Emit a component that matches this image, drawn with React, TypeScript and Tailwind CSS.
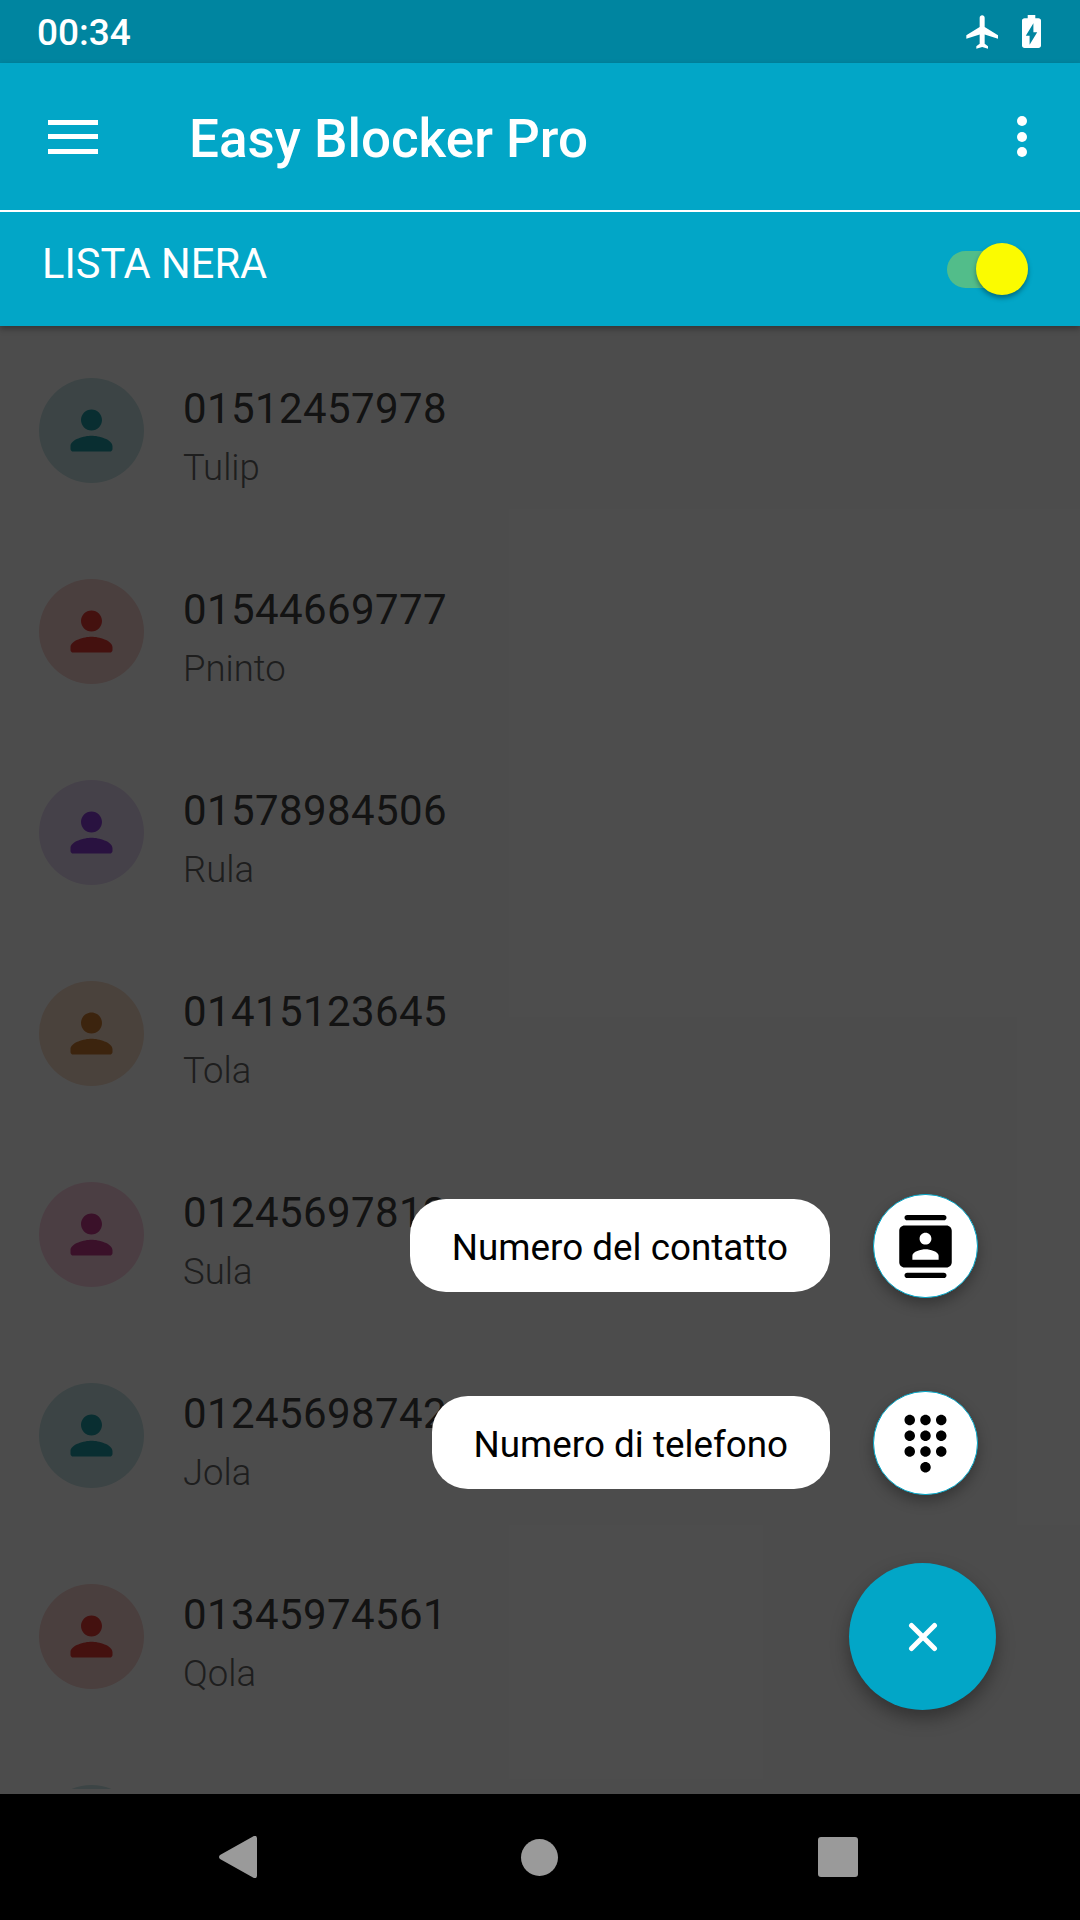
import React from 'react';

const PERSON = 'M12 12c2.21 0 4-1.79 4-4s-1.79-4-4-4-4 1.79-4 4 1.79 4 4 4zm0 2c-2.67 0-8 1.34-8 4v1c0 .55.45 1 1 1h14c.55 0 1-.45 1-1v-1c0-2.66-5.33-4-8-4z';
const CONTACTS = 'M19 0H5c-.55 0-1 .45-1 1s.45 1 1 1h14c.55 0 1-.45 1-1s-.45-1-1-1zM5 24h14c.55 0 1-.45 1-1s-.45-1-1-1H5c-.55 0-1 .45-1 1s.45 1 1 1zM20 4H4c-1.1 0-2 .9-2 2v12c0 1.1.9 2 2 2h16c1.1 0 2-.9 2-2V6c0-1.1-.9-2-2-2zm-8 2.75c1.24 0 2.25 1.01 2.25 2.25s-1.01 2.25-2.25 2.25S9.75 10.24 9.75 9 10.76 6.75 12 6.75zM17 17H7v-1.5c0-1.67 3.33-2.5 5-2.5s5 .83 5 2.5V17z';
const DIALPAD = 'M12 19c-1.1 0-2 .9-2 2s.9 2 2 2 2-.9 2-2-.9-2-2-2zM6 1c-1.1 0-2 .9-2 2s.9 2 2 2 2-.9 2-2-.9-2-2-2zm0 6c-1.1 0-2 .9-2 2s.9 2 2 2 2-.9 2-2-.9-2-2-2zm0 6c-1.1 0-2 .9-2 2s.9 2 2 2 2-.9 2-2-.9-2-2-2zm12-8c1.1 0 2-.9 2-2s-.9-2-2-2-2 .9-2 2 .9 2 2 2zm-6 8c-1.1 0-2 .9-2 2s.9 2 2 2 2-.9 2-2-.9-2-2-2zm6 0c-1.1 0-2 .9-2 2s.9 2 2 2 2-.9 2-2-.9-2-2-2zm0-6c-1.1 0-2 .9-2 2s.9 2 2 2 2-.9 2-2-.9-2-2-2zm-6 0c-1.1 0-2 .9-2 2s.9 2 2 2 2-.9 2-2-.9-2-2-2zm0-6c-1.1 0-2 .9-2 2s.9 2 2 2 2-.9 2-2-.9-2-2-2z';

const contacts = [
  { number: '01512457978', name: 'Tulip', circle: 'bg-[#c8e4e6]', icon: 'text-[#1f9ba5]' },
  { number: '01544669777', name: 'Pninto', circle: 'bg-[#f8d2cf]', icon: 'text-[#e53935]' },
  { number: '01578984506', name: 'Rula', circle: 'bg-[#e8d9f5]', icon: 'text-[#8a3fd8]' },
  { number: '01415123645', name: 'Tola', circle: 'bg-[#f8dcc8]', icon: 'text-[#c97a30]' },
  { number: '01245697812', name: 'Sula', circle: 'bg-[#fbd0e2]', icon: 'text-[#c43a8a]' },
  { number: '01245698742', name: 'Jola', circle: 'bg-[#c8e4e6]', icon: 'text-[#1f9ba5]' },
  { number: '01345974561', name: 'Qola', circle: 'bg-[#f8d2cf]', icon: 'text-[#e53935]' },
];

function Row({ number, name, circle, icon }: (typeof contacts)[number]) {
  return (
    <div className="flex h-[201px] shrink-0 pl-[39px]">
      <div className={`flex h-[105px] w-[105px] shrink-0 items-center justify-center rounded-full ${circle}`}>
        <svg width="63" height="63" viewBox="0 0 24 24" fill="currentColor" className={icon}>
          <path d={PERSON} />
        </svg>
      </div>
      <div className="ml-[39px] flex flex-col">
        <span className="mt-[3px] text-[42px] leading-[56px] tracking-[0.4px] text-[#404040]">{number}</span>
        <span className="mt-[8px] text-[36.5px] leading-[46px] font-light text-[#666]">{name}</span>
      </div>
    </div>
  );
}

function ActionRow({ label, path }: { label: string; path: string }) {
  return (
    <div className="mr-[18px] flex items-center gap-[43px]">
      <div className="mb-[1px] flex h-[93px] items-center rounded-[36px] bg-white px-[42px] pt-[5px] text-[36.8px] text-black">{label}</div>
      <div className="flex h-[104px] w-[105px] items-center justify-center rounded-full border border-[#02a6c7] bg-white shadow-[0_6px_14px_rgba(0,0,0,0.3)]">
        <svg width="63" height="63" viewBox="0 0 24 24" fill="currentColor" className="text-black">
          <path d={path} />
        </svg>
      </div>
    </div>
  );
}

export default function App() {
  return (
    <div className="flex h-[1920px] w-[1080px] flex-col overflow-hidden bg-black font-['Roboto',sans-serif]">
      {/* status bar */}
      <div className="flex h-[63px] shrink-0 items-center justify-between bg-[#0085a0] pl-[37px] pr-[39px] text-white">
        <span className="pt-[2px] text-[37px] font-medium">00:34</span>
        <div className="flex items-center gap-[19px]">
          <svg width="40" height="40" viewBox="0 0 24 24" fill="currentColor">
            <path d="M21 16v-2l-8-5V3.5c0-.83-.67-1.5-1.5-1.5S10 2.67 10 3.5V9l-8 5v2l8-2.5V19l-2 1.5V22l3.5-1 3.5 1v-1.5L13 19v-5.5l8 2.5z" />
          </svg>
          <svg width="19" height="33" viewBox="7 2 10 20" preserveAspectRatio="none" fill="currentColor">
            <path d="M15.67 4H14V2h-4v2H8.33C7.6 4 7 4.6 7 5.33v15.33C7 21.4 7.6 22 8.33 22h7.33c.74 0 1.34-.6 1.34-1.33V5.33C17 4.6 16.4 4 15.67 4zM11 20v-5.5H9L13 7v5.5h2L11 20z" />
          </svg>
        </div>
      </div>

      {/* toolbar + tab */}
      <div className="z-10 shrink-0 bg-[#02a6c7] text-white shadow-[0_3px_6px_rgba(0,0,0,0.3)]">
        <div className="flex h-[147px] items-center pl-[48px] pr-[53px]">
          <div className="flex h-[34px] w-[50px] flex-col justify-between">
            <div className="h-[5px] bg-white" />
            <div className="h-[5px] bg-white" />
            <div className="h-[5px] bg-white" />
          </div>
          <span className="ml-[91px] flex-1 pt-[5px] text-[53px] leading-none font-medium">Easy Blocker Pro</span>
          <div className="flex h-[41px] w-[10px] flex-col justify-between">
            <div className="h-[10px] rounded-full bg-white" />
            <div className="h-[10px] rounded-full bg-white" />
            <div className="h-[10px] rounded-full bg-white" />
          </div>
        </div>
        <div className="h-[2px] bg-white" />
        <div className="flex h-[114px] items-center justify-between pl-[42px] pr-[52px]">
          <span className="mb-[10px] text-[41.6px]">LISTA NERA</span>
          <div className="relative h-[37px] w-[81px] rounded-full bg-[#52bd8a]">
            <div className="absolute right-0 top-[-8px] h-[52px] w-[52px] rounded-full bg-[#fbfb00] shadow-[0_3px_5px_rgba(0,0,0,0.35)]" />
          </div>
        </div>
      </div>

      {/* list under a dim layer */}
      <div className="relative min-h-0 flex-1 bg-white pb-[5px]">
        <div className="flex h-full flex-col overflow-hidden pt-[52px]">
          {contacts.map((c) => (
            <Row key={c.number} {...c} />
          ))}
          <div className="ml-[39px] h-[105px] w-[105px] shrink-0 rounded-full bg-[#c8e4e6]" />
        </div>
        <div className="absolute inset-0 bg-black/70" />

        <div className="absolute bottom-[84px] right-[84px] flex flex-col items-end">
          <ActionRow label="Numero del contatto" path={CONTACTS} />
          <div className="h-[93px]" />
          <ActionRow label="Numero di telefono" path={DIALPAD} />
          <div className="h-[68px]" />
          <div className="flex h-[147px] w-[147px] items-center justify-center rounded-full bg-[#02a6c7] shadow-[0_8px_18px_rgba(0,0,0,0.35)]">
            <svg width="30" height="30" viewBox="0 0 30 30" stroke="white" strokeWidth="5" strokeLinecap="round">
              <path d="M3.5 3.5 26.5 26.5M26.5 3.5 3.5 26.5" />
            </svg>
          </div>
        </div>
      </div>

      {/* nav bar */}
      <div className="flex h-[126px] shrink-0 items-center bg-black">
        <svg width="38" height="42" viewBox="0 0 38 42" fill="#9a9a9a" className="ml-[219px]">
          <path d="M34 0.5c2-1.5 4-.5 4 2v37c0 2.5-2 3.5-4 2L1 23c-1.3-1-1.3-3 0-4z" />
        </svg>
        <div className="ml-[264px] h-[37px] w-[37px] rounded-full bg-[#9a9a9a]" />
        <div className="ml-[260px] h-[40px] w-[40px] rounded-[3px] bg-[#9a9a9a]" />
      </div>
    </div>
  );
}
